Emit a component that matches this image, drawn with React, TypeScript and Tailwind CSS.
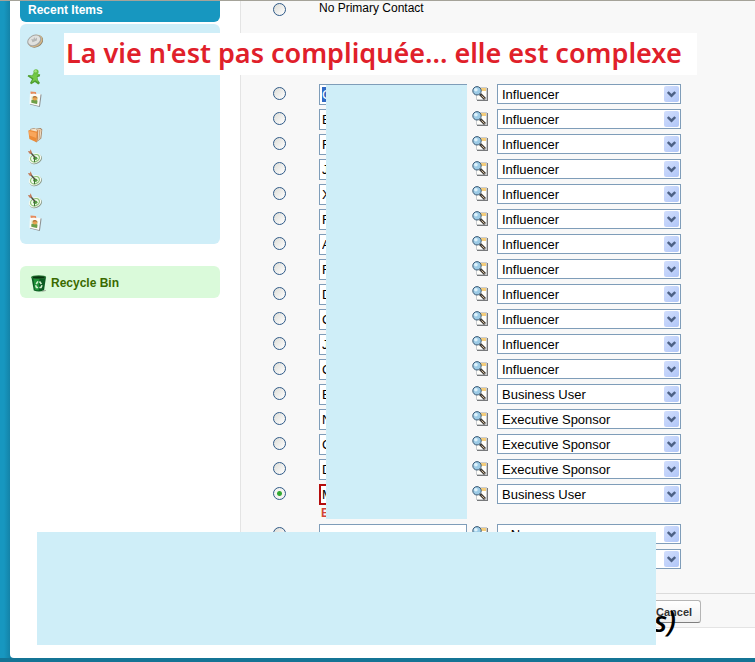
import React from 'react';

const roles = ['--None--', 'Influencer', 'Business User', 'Executive Sponsor'];

const contacts = [
  { name: 'C', role: 'Influencer', selected: true },
  { name: 'E', role: 'Influencer' },
  { name: 'F', role: 'Influencer' },
  { name: 'J', role: 'Influencer' },
  { name: 'X', role: 'Influencer' },
  { name: 'F', role: 'Influencer' },
  { name: 'A', role: 'Influencer' },
  { name: 'F', role: 'Influencer' },
  { name: 'D', role: 'Influencer' },
  { name: 'C', role: 'Influencer' },
  { name: 'J', role: 'Influencer' },
  { name: 'C', role: 'Influencer' },
  { name: 'E', role: 'Business User' },
  { name: 'N', role: 'Executive Sponsor' },
  { name: 'C', role: 'Executive Sponsor' },
  { name: 'D', role: 'Executive Sponsor' },
  { name: 'M', role: 'Business User', primary: true, error: 'E' },
  { name: '', role: '--None--' },
  { name: '', role: '--None--' },
];

function CoinIcon() {
  return (
    <svg width="16" height="16" viewBox="0 0 16 16" aria-hidden="true">
      <ellipse cx="8.6" cy="8.8" rx="7.6" ry="5.8" fill="#8d8270" transform="rotate(-28 8 8)" />
      <ellipse cx="8.2" cy="8" rx="7.6" ry="5.8" fill="#d9b985" transform="rotate(-28 8 8)" />
      <ellipse cx="7.6" cy="7.2" rx="7.4" ry="5.4" fill="#a3a4a2" transform="rotate(-28 8 8)" />
      <ellipse cx="7.6" cy="7.1" rx="6.3" ry="4.4" fill="#e0e1df" transform="rotate(-28 8 8)" />
      <path d="M4.3 6l1.2 3.2 4.4-1.6.1-3.2-1.8 1.6-1-2-.8 2.6z" fill="#b4b6b5" />
    </svg>
  );
}

function StarIcon() {
  return (
    <svg width="16" height="16" viewBox="0 0 16 16" aria-hidden="true">
      <path d="M6 4.6l3.2-.4 4 1.4-.5 1.8-2.2.7.3 2.6 2.2 3.4-1.7 1.5-3.4-2.7-3.7 2.4-1.2-1.3 2-3.8L.6 7.3l.8-1.4 4 .6z" fill="#4f9f30" />
      <path d="M6.4 4.8l2.8-.3 3.2 1.3-2.5 1.3.2 3.1 1.6 3-3.5-2-3.5 2 1.8-3.8-4.2-2.6 3.6.3z" fill="#74c947" />
      <circle cx="9" cy="2.8" r="2.6" fill="#6abf40" />
      <circle cx="8.6" cy="2.3" r="1.3" fill="#a5df80" />
    </svg>
  );
}

function ContactIcon() {
  return (
    <svg width="16" height="16" viewBox="0 0 16 16" aria-hidden="true">
      <path d="M4 2.2L14.6 3.5 12.9 16 3 13.6z" fill="#8e9192" />
      <path d="M3 2L13.6 2.9 12 15 2.4 12.8z" fill="#fbfaf6" />
      <path d="M4.6 5.3l6.6.6-.9 7.2-6-1.3z" fill="#dbe5bd" />
      <path d="M4.4 9.3c1.5-1.1 4.5-1 6 .6l-.4 3-5.6-1.2z" fill="#6d9e48" />
      <circle cx="7.9" cy="7.3" r="2.3" fill="#e8a351" />
      <path d="M5.7 6.7c.5-2 3.7-2 4.5.3l-2-.7z" fill="#9b6635" />
      <path d="M3.5.4l5.5.5.2 2.4-2.1-.7-3.4.3z" fill="#e78b5c" />
    </svg>
  );
}

function FolderIcon() {
  return (
    <svg width="16" height="16" viewBox="0 0 16 16" aria-hidden="true">
      <path d="M3 2l4.5-1 1.2.8 5-.8 1.6 1.4-1 9-5.2 4.2z" fill="#a78464" />
      <path d="M3.4 2.6l5-1 .9.9 4-.6 1.2 1-1.2 8.6-4 3z" fill="#f2e3cc" />
      <path d="M9.8 3.6l1.6-.8-.6 10.5-1.5 1.2z" fill="#c98550" />
      <path d="M12.1 3l1.4-.6-.9 9.4-1.2 1z" fill="#d8a474" />
      <path d="M1.3 3.4L3 3l7.4 1.8-.9 10.5L2.4 12z" fill="#ec8b38" />
      <path d="M1.9 4.1l7.7 1.7-.4 5.2-6.8-2.6z" fill="#f9a65c" />
    </svg>
  );
}

function TargetIcon() {
  return (
    <svg width="16" height="16" viewBox="0 0 16 16" aria-hidden="true">
      <ellipse cx="8.6" cy="10.2" rx="6.5" ry="5" fill="#899886" transform="rotate(-22 8 10)" />
      <ellipse cx="8.3" cy="9.3" rx="6.4" ry="4.9" fill="#f4faef" transform="rotate(-22 8 10)" />
      <ellipse cx="8.3" cy="9.2" rx="4.6" ry="3.4" fill="none" stroke="#8fc57b" strokeWidth="1.3" transform="rotate(-22 8 10)" />
      <ellipse cx="8.3" cy="9.2" rx="2.2" ry="1.7" fill="#56a044" />
      <path d="M3 2.8l5.2 6" stroke="#4c4b43" strokeWidth="1.3" />
      <path d="M7.5 9v4.2" stroke="#3f6e39" strokeWidth="1" />
      <path d="M.9 2.1l2 .2.8-2 1.2 3.1-.8 1.7-1.8-.6z" fill="#c47c5b" />
    </svg>
  );
}

function BinIcon() {
  return (
    <svg width="16" height="17" viewBox="0 0 16 17" aria-hidden="true">
      <path d="M.4 2L15 2 13 15.6Q8 17.6 2.8 15.6z" fill="#0b5b22" />
      <path d="M2.4 3.8h6l-.6 11.6-4-.5z" fill="#1f9138" />
      <ellipse cx="7.7" cy="2.2" rx="7.5" ry="1.9" fill="#2b7b39" />
      <ellipse cx="7.7" cy="2.4" rx="6" ry="1.1" fill="#07340f" />
      <path d="M5.2 9L7 6.4M8.5 6.4l1.9 2.5M4.6 10.2l.9 2.3h1.6M11 10.2l-1 2.3H8.4" stroke="#d2f0cf" strokeWidth="1.6" fill="none" />
      <path d="M11 16.2l3.8-.7" stroke="#98a494" />
    </svg>
  );
}

function LookupIcon() {
  return (
    <svg width="16" height="15" viewBox="0 0 16 15" aria-hidden="true">
      <path d="M5 2h11v13H5z" fill="#77797b" />
      <path d="M4 1h11v13H4z" fill="#c9cccf" />
      <path d="M5 2h9v11H5z" fill="#fffef9" />
      <path d="M5 2h9v3H5z" fill="#f4cd7c" />
      <path d="M8 8l5 5" stroke="#3c3a38" strokeWidth="2.8" />
      <path d="M9.5 9.5l3 3" stroke="#d8b98f" strokeWidth="1" />
      <circle cx="5" cy="4.8" r="4.2" fill="#9ccbe6" stroke="#3c5a74" />
      <circle cx="3.9" cy="3.7" r="1.8" fill="#dff2fb" />
    </svg>
  );
}

const recentItems = [
  { label: 'Opportunity', icon: <CoinIcon />, height: 'h-9' },
  { label: 'Lead', icon: <StarIcon />, height: 'h-[22px]' },
  { label: 'Contact', icon: <ContactIcon />, height: 'h-9' },
  { label: 'Account', icon: <FolderIcon />, height: 'h-[22px]' },
  { label: 'Campaign', icon: <TargetIcon />, height: 'h-[22px]' },
  { label: 'Campaign', icon: <TargetIcon />, height: 'h-[22px]' },
  { label: 'Campaign', icon: <TargetIcon />, height: 'h-[22px]' },
  { label: 'Contact', icon: <ContactIcon />, height: 'h-[22px]' },
];

function PrimaryRadio({ id, label, checked }: { id: string; label?: string; checked?: boolean }) {
  return (
    <input
      type="radio"
      id={id}
      name="primary"
      aria-label={label}
      defaultChecked={checked}
      className="block size-[13px] shrink-0 appearance-none rounded-full border border-[#2f5a88] bg-[linear-gradient(135deg,#dcdcd7,#ffffff)] checked:bg-[radial-gradient(circle,#2fa52f_0,#37ab37_2px,#f4f4f1_3px)]"
    />
  );
}

function RoleSelect({ label, value }: { label: string; value: string }) {
  return (
    <div className="relative w-[184px]">
      <select
        aria-label={label}
        defaultValue={value}
        className="block h-5 w-full appearance-none border border-[#7f9db9] bg-white pt-px pl-1 text-[13px] leading-[18px] text-black"
      >
        {roles.map((role) => (
          <option key={role}>{role}</option>
        ))}
      </select>
      <span className="pointer-events-none absolute top-0.5 right-0.5 flex h-4 w-[15px] items-center justify-center rounded-xs bg-[linear-gradient(135deg,#d3dffd,#b0c6f8)]">
        <svg width="9" height="7" viewBox="0 0 9 7" aria-hidden="true">
          <path d="M.8 1l3.7 3.7L8.2 1" fill="none" stroke="#4d6185" strokeWidth="2.4" />
        </svg>
      </span>
    </div>
  );
}

function Sidebar() {
  return (
    <aside className="w-[230px] shrink-0 pr-5 pl-2.5">
      <h2 className="h-[21px] rounded-b-md bg-[#1797c0] pl-2 text-xs leading-[18px] font-bold text-white">
        Recent Items
      </h2>
      <ul className="mt-0.5 rounded-md bg-[#cfeef8] pt-[9px] pb-[7px] pl-[7px]">
        {recentItems.map((item, i) => (
          <li key={i} className={item.height}>
            <a href="#" aria-label={item.label} className="block w-4">
              {item.icon}
            </a>
          </li>
        ))}
      </ul>
      <a
        href="#"
        className="mt-[22px] flex h-8 items-center gap-1 rounded-md bg-[#dafada] pt-0.5 pl-[11px] text-xs font-bold text-[#3a6a00]"
      >
        <BinIcon />
        Recycle Bin
      </a>
    </aside>
  );
}

function ContactRoles() {
  return (
    <table className="w-full table-fixed border-collapse">
      <colgroup>
        <col className="w-[78px]" />
        <col className="w-[178px]" />
        <col />
      </colgroup>
      <tbody>
        <tr className="h-[81px] align-top">
          <td className="pt-0.5 pl-8">
            <PrimaryRadio id="primary-none" />
          </td>
          <td colSpan={2} className="text-xs leading-[14px] text-black">
            <label htmlFor="primary-none">No Primary Contact</label>
          </td>
        </tr>
        {contacts.map((contact, i) => (
          <tr key={i} className={contact.error ? 'h-10 align-top' : 'h-[25px] align-top'}>
            <td className="pt-[5px] pl-8">
              <PrimaryRadio id={`primary-${i}`} label={`Primary contact ${i + 1}`} checked={contact.primary} />
            </td>
            <td className="pt-0.5">
              <div className="flex items-start gap-[5px]">
                <input
                  type="text"
                  aria-label={`Contact ${i + 1}`}
                  defaultValue={contact.name}
                  className={
                    'h-[21px] w-[148px] text-[13px] leading-4 ' +
                    (contact.error
                      ? 'border-2 border-[#b50d0d] bg-white px-px text-black'
                      : contact.selected
                        ? 'border border-[#7f9db9] bg-[#316ac5] px-0.5 text-white inset-shadow-[0_0_0_2px_#fff]'
                        : 'border border-[#7f9db9] bg-white px-0.5 text-black')
                  }
                />
                <button type="button" aria-label={`Lookup contact ${i + 1}`} className="pt-0.5">
                  <LookupIcon />
                </button>
              </div>
              {contact.error && (
                <p className="pl-0.5 text-xs leading-4 font-bold text-[#d04638]">{contact.error}</p>
              )}
            </td>
            <td className="pt-0.5">
              <RoleSelect label={`Role ${i + 1}`} value={contact.role} />
            </td>
          </tr>
        ))}
      </tbody>
    </table>
  );
}

export default function App() {
  return (
    <div className="relative overflow-hidden border-t border-[#a5a399] bg-[#147495] font-['Liberation_Sans',Arial,sans-serif]">
      <div className="bg-[linear-gradient(90deg,#1797c0_0,#1797c0_4px,#1483a8_10px)] pl-2.5">
        <div className="flex rounded-bl bg-white pb-[30px]">
          <Sidebar />
          <main className="min-w-0 flex-1 border-b border-l border-[#e4e4e4] bg-[#f8f8f8]">
            <div className="relative pb-[21px]">
              <ContactRoles />
              <div className="absolute top-[84px] left-[85px] h-[434px] w-[141px] bg-[#cfeef8]" />
            </div>
            <div className="border-t border-[#dbdbdb] pt-1.5 pb-1 pl-[406px]">
              <button
                type="button"
                className="block h-[23px] rounded-[3px] border border-[#b5b5b5] border-b-[#7f7f7f] bg-[linear-gradient(#ffffff,#efefef)] px-2 text-[11px] leading-5 font-bold text-[#333333]"
              >
                Cancel
              </button>
            </div>
          </main>
        </div>
      </div>
      <div className="h-1" />

      <p className="absolute top-8 left-16 h-[42px] w-[633px] bg-white pl-0.5 text-[27px] leading-10 font-semibold whitespace-nowrap text-[#e0202a] font-['Noto_Sans','Open_Sans',sans-serif]">
        La vie n'est pas compliquée... elle est complexe
      </p>
      <p className="absolute top-[600px] left-[654px] text-[29px] leading-10 font-semibold text-black italic font-['Open_Sans','Noto_Sans',sans-serif]">
        s)
      </p>
      <div className="absolute top-[531px] left-[37px] h-[113px] w-[619px] bg-[#cfeef8]" />
    </div>
  );
}
